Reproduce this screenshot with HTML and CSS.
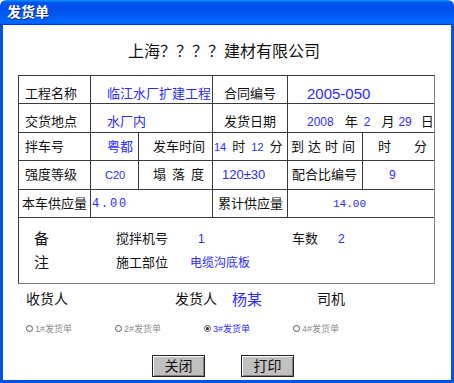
FILE: index.html
```html
<!DOCTYPE html>
<html lang="zh-CN">
<head>
<meta charset="utf-8">
<title>发货单</title>
<link rel="stylesheet" href="styles.css">
</head>
<body>
<div class="window">
  <div class="titlebar">发货单</div>
  <div class="client">
    <h1 class="heading">上海？？？？建材有限公司</h1>

    <div class="form">
      <div class="cell low p6">工程名称</div>
      <div class="cell low span2 p16 blue">临江水厂扩建工程</div>
      <div class="cell low p11">合同编号</div>
      <div class="cell low span2 p19 blue big">2005-050</div>

      <div class="cell low p6">交货地点</div>
      <div class="cell low span2 p16 blue">水厂内</div>
      <div class="cell low p11">发货日期</div>
      <div class="cell low span2 p19 date">
        <span class="blue n12">2008</span><span class="g11">年</span><span class="blue n12 g6">2</span><span class="g11">月</span><span class="blue n12 g4">29</span><span class="g9">日</span>
      </div>

      <div class="cell p6">拌车号</div>
      <div class="cell p16 blue">粤都</div>
      <div class="cell p14">发车时间</div>
      <div class="cell p1 time">
        <span class="blue n11">14</span><span class="g6">时</span><span class="blue n11 g6">12</span><span class="g6">分</span>
      </div>
      <div class="cell p3 wide4">到达时间</div>
      <div class="cell p15"><span>时</span><span class="g23">分</span></div>

      <div class="cell p6">强度等级</div>
      <div class="cell p14 blue n11">C20</div>
      <div class="cell p14 wide6">塌落度</div>
      <div class="cell p9 blue n13">120±30</div>
      <div class="cell p4">配合比编号</div>
      <div class="cell p26 blue n12">9</div>

      <div class="cell p3">本车供应量</div>
      <div class="cell span2 p1 blue mono12">4.00</div>
      <div class="cell p5">累计供应量</div>
      <div class="cell span2 p45 blue mono11">14.00</div>

      <div class="cell span6 notes">
        <div class="note-row">
          <span class="nt">备</span>
          <span class="nl82">搅拌机号</span>
          <span class="blue n12 nv94">1</span>
          <span class="nl46">车数</span>
          <span class="blue n12">2</span>
        </div>
        <div class="note-row">
          <span class="nt">注</span>
          <span class="nl74">施工部位</span>
          <span class="blue s12">电缆沟底板</span>
        </div>
      </div>
    </div>

    <div class="signers">
      <span class="sg149">收货人</span>
      <span class="sg57">发货人</span>
      <span class="sg85 blue name">杨某</span>
      <span>司机</span>
    </div>

    <div class="radios">
      <div class="opt"><span class="radio"></span><span>1#发货单</span></div>
      <div class="opt"><span class="radio"></span><span>2#发货单</span></div>
      <div class="opt on"><span class="radio checked"></span><span>3#发货单</span></div>
      <div class="opt"><span class="radio"></span><span>4#发货单</span></div>
    </div>

    <div class="buttons">
      <button class="btn" type="button">关闭</button>
      <button class="btn" type="button">打印</button>
    </div>
  </div>
</div>
</body>
</html>
```

FILE: styles.css
```css
* { box-sizing: border-box; }
html, body { margin: 0; padding: 0; background: #fff; }
body {
  font-family: "Liberation Sans", "Noto Sans CJK SC", sans-serif;
  color: #111;
  font-size: 13px;
}
.window {
  width: 454px;
  height: 383px;
  display: flex;
  flex-direction: column;
}
.titlebar {
  height: 25px;
  flex: none;
  border-radius: 6px 6px 0 0;
  background: linear-gradient(180deg, #0997ff 0, #0053ee 10%, #0050ee 40%, #0066ff 86%, #0066ff 92%, #005bff 95%, #003dd7 97%, #003dd7 100%);
  color: #fff;
  font-weight: bold;
  font-size: 14px;
  line-height: 25px;
  padding-left: 7px;
  text-shadow: 1px 1px 0 #0a2a8a;
}
.client {
  flex: 1;
  border-left: 3px solid #0553e6;
  border-right: 3px solid #0553e6;
  border-bottom: 3px solid #0553e6;
  background: #fff;
  display: flex;
  flex-direction: column;
}
.heading {
  margin: 0;
  padding-top: 17px;
  height: 50px;
  line-height: 20px;
  font-size: 16px;
  font-weight: normal;
  text-align: center;
  padding-right: 6px;
  color: #111;
}
.form {
  margin-left: 15px;
  width: 417px;
  display: grid;
  grid-template-columns: 71px 47px 73px 74px 74px 71px;
  grid-template-rows: 27px 28px 27px 28px 27px 65px;
  gap: 1px;
  background: #3a3a3a;
  border: 1px solid #3a3a3a;
  border-right-color: #808080;
  border-bottom-color: #808080;
}
.cell {
  background: #fff;
  display: flex;
  align-items: center;
  white-space: nowrap;
  overflow: hidden;
  line-height: 16px;
}
.low { padding-top: 8px; }
.span2 { grid-column: span 2; }
.span6 { grid-column: span 6; }
.p1 { padding-left: 1px; }
.p3 { padding-left: 3px; }
.p4 { padding-left: 4px; }
.p5 { padding-left: 5px; }
.p6 { padding-left: 6px; }
.p9 { padding-left: 9px; }
.p11 { padding-left: 11px; }
.p14 { padding-left: 14px; }
.p15 { padding-left: 15px; }
.p16 { padding-left: 16px; }
.p19 { padding-left: 19px; }
.p26 { padding-left: 26px; }
.p45 { padding-left: 45px; }
.blue { color: #2b2bff; }
.big { font-size: 15px; }
.n11 { font-size: 11px; }
.n12 { font-size: 12px; }
.n13 { font-size: 13px; }
.s12 { font-size: 12px; }
.mono12 { font-family: "Liberation Mono", monospace; font-size: 12px; letter-spacing: 1.8px; }
.mono11 { font-family: "Liberation Mono", monospace; font-size: 11px; }
.g4 { margin-left: 4px; }
.g6 { margin-left: 6px; }
.g9 { margin-left: 9px; }
.g11 { margin-left: 11px; }
.g23 { margin-left: 23px; }
.wide4 { letter-spacing: 4px; }
.wide6 { letter-spacing: 6px; }

.notes {
  display: block;
  padding: 9px 0 0 15px;
}
.note-row {
  display: flex;
  align-items: center;
  height: 24px;
  line-height: 24px;
}
.nt { width: 82px; font-size: 15px; }
.nl82 { width: 82px; }
.nl74 { width: 74px; }
.nl46 { width: 46px; }
.nv94 { width: 94px; }

.signers {
  display: flex;
  align-items: center;
  height: 28px;
  padding-left: 23px;
  font-size: 14px;
}
.sg149 { width: 149px; }
.sg57 { width: 57px; }
.sg85 { width: 85px; }
.name { font-size: 15px; }

.radios {
  display: flex;
  align-items: center;
  height: 32px;
  padding-left: 23px;
}
.opt {
  width: 89px;
  display: flex;
  align-items: center;
  gap: 2px;
  font-size: 9px;
  color: #8a8a8a;
}
.opt.on { color: #2b2bff; }
.radio {
  width: 7px;
  height: 7px;
  border: 1px solid #555;
  border-radius: 50%;
  background: #fff;
  position: relative;
  flex: none;
}
.radio.checked::after {
  content: "";
  position: absolute;
  left: 1px;
  top: 1px;
  width: 3px;
  height: 3px;
  border-radius: 50%;
  background: #222;
}

.buttons {
  display: flex;
  gap: 36px;
  padding-left: 149px;
  margin-top: 11px;
}
.btn {
  width: 53px;
  height: 22px;
  padding: 0;
  margin: 0;
  font-family: "Liberation Sans", "Noto Sans CJK SC", sans-serif;
  font-size: 14px;
  color: #111;
  background: #c0c0c0;
  border: 1px solid #222;
  box-shadow: inset 1px 1px 0 #fff, inset -1px -1px 0 #808080;
  line-height: 20px;
}
```
